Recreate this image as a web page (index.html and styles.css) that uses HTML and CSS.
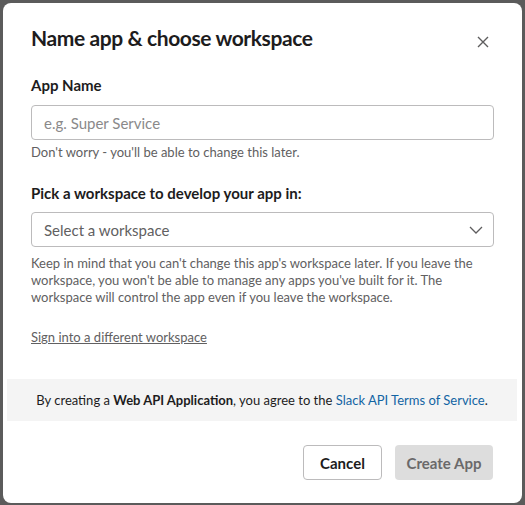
FILE: index.html
```html
<!DOCTYPE html>
<html lang="en">
<head>
<meta charset="utf-8">
<title>Name app &amp; choose workspace</title>
<link rel="stylesheet" href="styles.css">
</head>
<body>
<div class="modal" role="dialog">
  <div class="modal-header">
    <h1 class="modal-title">Name app &amp; choose workspace</h1>
    <button class="close-btn" aria-label="Close">
      <svg width="12" height="12" viewBox="0 0 12 12"><path d="M1 1 L11 11 M11 1 L1 11" stroke="#5e5d5e" stroke-width="1.4" fill="none"/></svg>
    </button>
  </div>
  <div class="modal-body">
    <label class="field-label first">App Name</label>
    <div class="text-input"><span class="placeholder">e.g. Super Service</span></div>
    <p class="hint">Don't worry - you'll be able to change this later.</p>

    <label class="field-label second">Pick a workspace to develop your app in:</label>
    <div class="select-input">
      <span class="select-text">Select a workspace</span>
      <svg class="chevron" width="14" height="8" viewBox="0 0 14 8"><path d="M1 1 L7 7 L13 1" stroke="#5e5d5e" stroke-width="1.3" fill="none"/></svg>
    </div>
    <p class="note">Keep in mind that you can't change this app's workspace later. If you leave the workspace, you won't be able to manage any apps you've built for it. The workspace will control the app even if you leave the workspace.</p>
    <a class="sign-link" href="#">Sign into a different workspace</a>
  </div>
  <div class="terms"><span>By creating a <b>Web API Application</b>, you agree to the <a href="#" class="terms-link">Slack API Terms of Service</a>.</span></div>
  <div class="modal-footer">
    <button class="btn btn-cancel">Cancel</button>
    <button class="btn btn-create">Create App</button>
  </div>
</div>
</body>
</html>
```
FILE: styles.css
```css
html, body {
  margin: 0;
  padding: 0;
}
body {
  background: #5b5b5b;
  width: 525px;
  height: 505px;
  overflow: hidden;
  font-family: Lato, "Noto Sans", sans-serif;
  color: #1d1c1d;
  padding: 3px 0 0 3px;
  box-sizing: border-box;
}
.modal {
  width: 519px;
  height: 500px;
  background: #ffffff;
  border-radius: 8px;
  display: flex;
  flex-direction: column;
  box-sizing: border-box;
}
.modal-header {
  display: flex;
  justify-content: space-between;
  align-items: flex-start;
  padding: 21px 29px 0 28px;
}
.modal-title {
  margin: 0;
  font-size: 21px;
  line-height: 28px;
  font-weight: 700;
  letter-spacing: -0.4px;
  color: #1d1c1d;
}
.close-btn {
  border: none;
  background: none;
  padding: 0;
  margin: 12px 4px 0 0;
  width: 12px;
  height: 12px;
  display: flex;
}
.modal-body {
  padding: 0 28px;
  display: flex;
  flex-direction: column;
  align-items: flex-start;
}
.field-label {
  font-size: 15px;
  line-height: 20px;
  font-weight: 700;
  color: #1d1c1d;
}
.field-label.first { margin-top: 23px; }
.field-label.second { margin-top: 22px; }
.text-input,
.select-input {
  width: 463px;
  height: 35px;
  box-sizing: border-box;
  border: 1px solid #bcbbbc;
  border-radius: 4px;
  display: flex;
  align-items: center;
  padding: 0 12px;
  font-size: 15px;
}
.text-input { margin-top: 10px; }
.select-input {
  margin-top: 9px;
  justify-content: space-between;
}
.placeholder { color: #8a898a; }
.select-text { color: #616061; }
.chevron { margin-right: -2px; }
.hint {
  margin: 3px 0 0;
  font-size: 13px;
  line-height: 18px;
  color: #616061;
}
.note {
  margin: 8px 0 0;
  font-size: 13px;
  line-height: 17px;
  color: #616061;
  width: 462px;
}
.sign-link {
  margin-top: 23px;
  font-size: 13px;
  line-height: 17px;
  color: #616061;
  text-decoration: underline;
}
.terms {
  margin: 33px 5px 0 4px;
  height: 42px;
  background: #f4f4f4;
  display: flex;
  align-items: center;
  justify-content: center;
  font-size: 13px;
  line-height: 17px;
  color: #1d1c1d;
}
.terms b { font-weight: 700; }
.terms-link { color: #1264a3; text-decoration: none; }
.modal-footer {
  display: flex;
  justify-content: flex-end;
  gap: 13px;
  padding: 24px 29px 0 0;
}
.btn {
  height: 35px;
  border-radius: 4px;
  font-family: Lato, "Noto Sans", sans-serif;
  font-size: 15px;
  font-weight: 700;
  padding: 0;
  box-sizing: border-box;
}
.btn-cancel {
  width: 79px;
  background: #ffffff;
  border: 1px solid #bcbbbc;
  color: #1d1c1d;
}
.btn-create {
  width: 98px;
  background: #dddddd;
  border: none;
  color: #6a696a;
}
```
